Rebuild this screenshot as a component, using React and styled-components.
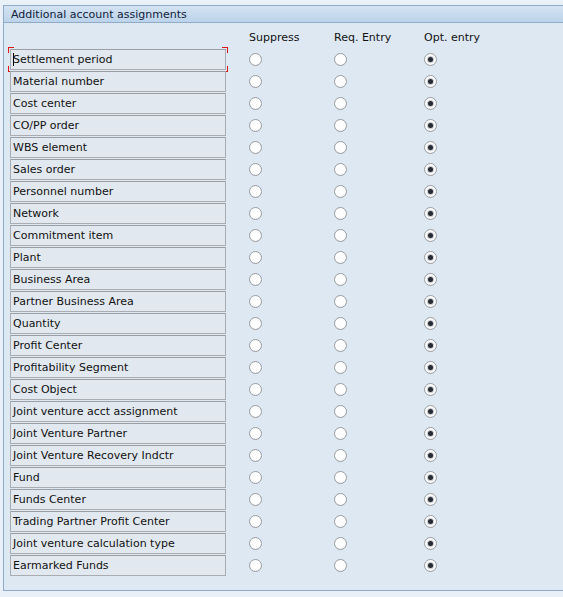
import React from 'react'
import styled, { createGlobalStyle } from 'styled-components'

const GlobalStyle = createGlobalStyle`
  body {
    margin: 0;
    background: #e9f0f7;
    font-family: "DejaVu Sans", "Liberation Sans", Arial, sans-serif;
  }
`;

const Page = styled.div`
  padding: 5px 0 0 3px;
  height: 597px;
  box-sizing: border-box;
  overflow: hidden;
`;

const Panel = styled.div`
  border: 1px solid #8eabc9;
  border-right: none;
  background: #dde8f3;
`;

const PanelTitle = styled.div`
  height: 15px;
  padding-top: 1px;
  line-height: 16px;
  padding-left: 7px;
  font-size: 11px;
  color: #10223a;
  background: linear-gradient(#d3e3f2, #bcd3ea);
  border-bottom: 1px solid #8eabc9;
`;

const Grid = styled.div`
  display: grid;
  grid-template-columns: 239px 85px 90px 1fr;
  grid-auto-rows: 22px;
  padding: 4px 0 13px 6px;
`;

const ColHead = styled.div`
  font-size: 11px;
  color: #111;
  line-height: 14px;
  padding-top: 4px;
`;

const Label = styled.div`
  position: relative;
  width: 216px;
  height: 21px;
  box-sizing: border-box;
  border: 1px solid #a9adb2;
  border-top-color: #9b9fa4;
  background: #e1e8ef;
  padding-left: 2px;
  font-size: 11px;
  line-height: 19px;
  color: #111;
  white-space: nowrap;
`;

const Caret = styled.span`
  display: inline-block;
  width: 1px;
  height: 13px;
  background: #000;
  vertical-align: -3px;
  margin-right: -1px;
`;

// red focus brackets drawn at the four corners of the active field
const Corner = styled.span`
  position: absolute;
  width: 5px;
  height: 5px;
  border: 0 solid #e01515;
  ${(p) => (p.v === 'top' ? 'top: -3px; border-top-width: 1px;' : 'bottom: -3px; border-bottom-width: 1px;')}
  ${(p) => (p.h === 'left' ? 'left: -3px; border-left-width: 1px;' : 'right: -3px; border-right-width: 1px;')}
`;

const Cell = styled.div`
  display: flex;
  align-items: flex-start;
  padding-top: 4px;
`;

const Radio = styled.span`
  width: 13px;
  height: 13px;
  box-sizing: border-box;
  border-radius: 50%;
  border: 1px solid #9a9da1;
  background: radial-gradient(circle at 50% 40%, #ffffff 55%, #ececec 100%);
  display: flex;
  align-items: center;
  justify-content: center;

  &::after {
    content: '';
    display: ${(p) => (p.checked ? 'block' : 'none')};
    width: 5px;
    height: 5px;
    border-radius: 50%;
    background: #262a33;
    box-shadow: 0 0 0 1px #c4c8ce;
  }
`;

const fields = [
  'Settlement period',
  'Material number',
  'Cost center',
  'CO/PP order',
  'WBS element',
  'Sales order',
  'Personnel number',
  'Network',
  'Commitment item',
  'Plant',
  'Business Area',
  'Partner Business Area',
  'Quantity',
  'Profit Center',
  'Profitability Segment',
  'Cost Object',
  'Joint venture acct assignment',
  'Joint Venture Partner',
  'Joint Venture Recovery Indctr',
  'Fund',
  'Funds Center',
  'Trading Partner Profit Center',
  'Joint venture calculation type',
  'Earmarked Funds',
];

export default function App() {
  return (
    <Page>
      <GlobalStyle />
      <Panel>
        <PanelTitle>Additional account assignments</PanelTitle>
        <Grid>
          <ColHead />
          <ColHead>Suppress</ColHead>
          <ColHead>Req. Entry</ColHead>
          <ColHead>Opt. entry</ColHead>
          {fields.map((name, index) => (
            <React.Fragment key={name}>
              <div>
                <Label>
                  {index === 0 && <Caret />}
                  {name}
                  {index === 0 && (
                    <>
                      <Corner v="top" h="left" />
                      <Corner v="top" h="right" />
                      <Corner v="bottom" h="left" />
                      <Corner v="bottom" h="right" />
                    </>
                  )}
                </Label>
              </div>
              <Cell><Radio /></Cell>
              <Cell><Radio /></Cell>
              <Cell><Radio checked /></Cell>
            </React.Fragment>
          ))}
        </Grid>
      </Panel>
    </Page>
  )
}
